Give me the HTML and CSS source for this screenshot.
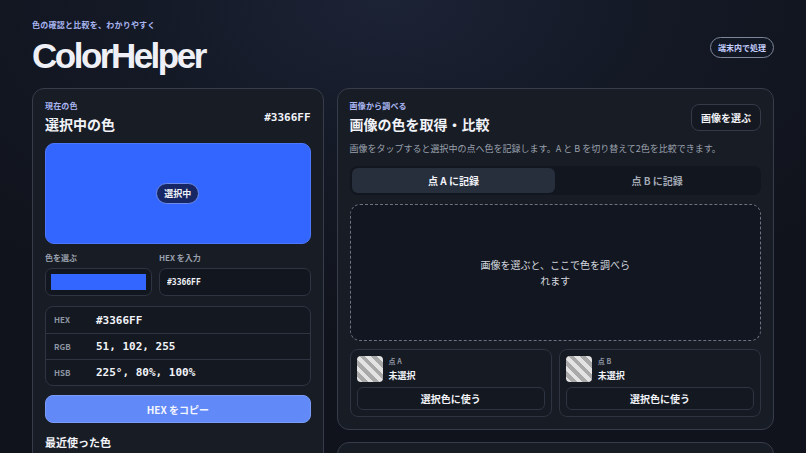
FILE: index.html
```html
<!DOCTYPE html>
<html lang="ja">
<head>
    <meta charset="UTF-8">
    <meta name="viewport" content="width=device-width, initial-scale=1.0">
    <title>ColorHelper</title>
    <link rel="stylesheet" href="styles.css">
</head>
<body>

<div class="page">
    <header class="header">
        <div>
            <p class="eyebrow">色の確認と比較を、わかりやすく</p>
            <h1 class="logo">ColorHelper</h1>
        </div>
        <span class="badge">端末内で処理</span>
    </header>

    <main class="layout">
        <section class="card">
            <div class="card-head">
                <div>
                    <p class="eyebrow small">現在の色</p>
                    <h2>選択中の色</h2>
                </div>
                <span class="mono current-hex">#3366FF</span>
            </div>

            <div class="swatch">
                <span class="swatch-pill">選択中</span>
            </div>

            <div class="pickers">
                <div class="field">
                    <label for="picker">色を選ぶ</label>
                    <div class="picker-box"><input type="color" id="picker" value="#3366ff"></div>
                </div>
                <div class="field">
                    <label for="hexInput">HEX を入力</label>
                    <input type="text" id="hexInput" class="hex-input" value="#3366FF">
                </div>
            </div>

            <table class="values">
                <tr><th>HEX</th><td>#3366FF</td></tr>
                <tr><th>RGB</th><td>51, 102, 255</td></tr>
                <tr><th>HSB</th><td>225°, 80%, 100%</td></tr>
            </table>

            <button class="copy-btn">HEX をコピー</button>

            <h3>最近使った色</h3>
            <div class="recent">
                <span class="recent-item" style="background: #3366ff"></span>
            </div>
        </section>

        <div class="column">
            <section class="card">
                <div class="card-head">
                    <div>
                        <p class="eyebrow small">画像から調べる</p>
                        <h2>画像の色を取得・比較</h2>
                    </div>
                    <button class="ghost-btn">画像を選ぶ</button>
                </div>

                <p class="desc">画像をタップすると選択中の点へ色を記録します。A と B を切り替えて2色を比較できます。</p>

                <div class="tabs">
                    <button class="tab active">点 A に記録</button>
                    <button class="tab">点 B に記録</button>
                </div>

                <div class="drop">
                    <p>画像を選ぶと、ここで色を調べられます</p>
                </div>

                <div class="points">
                    <div class="point">
                        <div class="point-info">
                            <span class="empty-swatch"></span>
                            <div>
                                <p class="point-label">点 A</p>
                                <p class="point-value">未選択</p>
                            </div>
                        </div>
                        <button class="use-btn">選択色に使う</button>
                    </div>
                    <div class="point">
                        <div class="point-info">
                            <span class="empty-swatch"></span>
                            <div>
                                <p class="point-label">点 B</p>
                                <p class="point-value">未選択</p>
                            </div>
                        </div>
                        <button class="use-btn">選択色に使う</button>
                    </div>
                </div>
            </section>

            <section class="card compare"></section>
        </div>
    </main>
</div>

</body>
</html>
```

FILE: styles.css
```css
* {
    box-sizing: border-box;
}
html, body {
    margin: 0;
    background: #10131b;
}
body {
    font-family: "Noto Sans CJK JP", "Noto Sans", sans-serif;
    color: #f1f3f8;
    background: radial-gradient(ellipse 70% 60% at 48% 0%, #1c2335 0%, #141926 45%, #10131b 100%);
    min-height: 100vh;
    overflow: hidden;
}
p, h1, h2, h3 {
    margin: 0;
}
button, input {
    font-family: inherit;
    color: inherit;
}

.page {
    padding: 19px 32px 0;
}
.header {
    display: flex;
    justify-content: space-between;
    align-items: center;
}
.eyebrow {
    font-size: 8px;
    line-height: 12px;
    font-weight: 700;
    letter-spacing: 0.03em;
    color: #a9b6f2;
}
.eyebrow.small {
    font-size: 8px;
    letter-spacing: 0.02em;
}
.logo {
    margin-top: 5px;
    font-family: "Liberation Sans", Arial, sans-serif;
    font-size: 35px;
    line-height: 40px;
    font-weight: 700;
    letter-spacing: -2.5px;
    color: #eef0f6;
}
.badge {
    padding: 4px 7px;
    font-size: 8px;
    line-height: 11px;
    font-weight: 700;
    color: #c3cdfa;
    border: 1px solid #7e869a;
    border-radius: 999px;
    background: #121724;
}

.layout {
    display: grid;
    grid-template-columns: 2fr 3fr;
    gap: 13px;
    margin-top: 12px;
    align-items: start;
}
.column {
    display: flex;
    flex-direction: column;
    gap: 12px;
}
.card {
    background: #181c25;
    border: 1px solid #363c4a;
    border-radius: 12px;
    padding: 11px 12px 12px;
}
.card.compare {
    min-height: 120px;
}
.card-head {
    display: flex;
    justify-content: space-between;
    align-items: center;
}
.card-head h2 {
    margin-top: 2px;
    font-size: 14px;
    line-height: 20px;
    font-weight: 700;
}
.mono {
    font-family: "DejaVu Sans Mono", "Liberation Mono", monospace;
    font-weight: 700;
}
.current-hex {
    font-size: 11px;
}

.swatch {
    margin-top: 9px;
    height: 101px;
    border-radius: 9px;
    background: #3366ff;
    border: 1px solid #4c78ff;
    display: flex;
    align-items: center;
    justify-content: center;
}
.swatch-pill {
    padding: 3px 7px;
    font-size: 9px;
    line-height: 13px;
    font-weight: 700;
    background: #172664;
    border: 1px solid #6d8be6;
    border-radius: 999px;
}

.pickers {
    margin-top: 8px;
    display: grid;
    grid-template-columns: 107px 1fr;
    gap: 7px;
}
.field label {
    display: block;
    font-size: 8px;
    line-height: 12px;
    font-weight: 700;
    color: #9aa1ae;
    margin-bottom: 4px;
}
.picker-box {
    height: 28px;
    padding: 5px;
    background: #12161e;
    border: 1px solid #2e3441;
    border-radius: 7px;
}
.picker-box input {
    display: block;
    width: 100%;
    height: 100%;
    padding: 0;
    border: none;
    background: #3366ff;
    appearance: none;
    -webkit-appearance: none;
}
.picker-box input::-webkit-color-swatch-wrapper {
    padding: 0;
}
.picker-box input::-webkit-color-swatch {
    border: none;
}
.hex-input {
    display: block;
    width: 100%;
    height: 28px;
    padding: 0 7px;
    font-family: "DejaVu Sans Mono", monospace;
    font-size: 8px;
    font-weight: 700;
    background: #12161e;
    border: 1px solid #2e3441;
    border-radius: 7px;
}

.values {
    margin-top: 10px;
    width: 100%;
    border-collapse: separate;
    border-spacing: 0;
    border: 1px solid #2e3441;
    border-radius: 8px;
    background: #141820;
}
.values th, .values td {
    height: 26px;
    text-align: left;
    border-top: 1px solid #2e3441;
}
.values tr:first-child th, .values tr:first-child td {
    border-top: none;
}
.values th {
    width: 49px;
    padding-left: 8px;
    font-size: 8px;
    font-weight: 700;
    color: #8f96a3;
    vertical-align: top;
    padding-top: 7px;
}
.values td {
    font-family: "DejaVu Sans Mono", monospace;
    font-size: 11px;
    font-weight: 700;
    color: #f1f3f8;
}

.copy-btn {
    margin-top: 9px;
    display: block;
    width: 100%;
    height: 28px;
    border: 1px solid #7b9bf9;
    border-radius: 8px;
    background: #6189f7;
    font-size: 10px;
    font-weight: 700;
    color: #f4f6ff;
}
.card h3 {
    margin-top: 11px;
    font-size: 11px;
    line-height: 16px;
    font-weight: 700;
}
.recent {
    margin-top: 8px;
    display: flex;
    gap: 6px;
}
.recent-item {
    width: 26px;
    height: 26px;
    border-radius: 6px;
}

.ghost-btn {
    height: 27px;
    padding: 0 9px;
    font-size: 10px;
    font-weight: 700;
    background: #141820;
    border: 1px solid #343a48;
    border-radius: 8px;
}
.desc {
    margin-top: 8px;
    font-size: 9px;
    line-height: 14px;
    color: #9aa1ae;
}
.tabs {
    margin-top: 10px;
    display: grid;
    grid-template-columns: 1fr 1fr;
    padding: 2px;
    background: #12161e;
    border-radius: 8px;
}
.tab {
    height: 25px;
    border: none;
    border-radius: 6px;
    background: transparent;
    font-size: 10px;
    font-weight: 700;
    color: #a3aab6;
}
.tab.active {
    background: #272e3c;
    color: #f1f3f8;
}
.drop {
    margin-top: 9px;
    height: 137px;
    border: 1px dashed #6c7381;
    border-radius: 10px;
    background: #121620;
    display: flex;
    align-items: center;
    justify-content: center;
}
.drop p {
    max-width: 152px;
    font-size: 10px;
    line-height: 16px;
    text-align: center;
    color: #d3d7df;
}

.points {
    margin-top: 8px;
    display: grid;
    grid-template-columns: 1fr 1fr;
    gap: 7px;
}
.point {
    padding: 6px;
    border: 1px solid #2e3441;
    border-radius: 8px;
    background: #161a22;
}
.point-info {
    display: flex;
    align-items: center;
    gap: 6px;
}
.empty-swatch {
    width: 26px;
    height: 26px;
    border-radius: 4px;
    background: repeating-linear-gradient(45deg, #e3e3e3 0 4px, #a9a9a9 4px 8px);
}
.point-label {
    font-size: 7px;
    line-height: 11px;
    font-weight: 700;
    color: #8f96a3;
}
.point-value {
    margin-top: 2px;
    font-size: 9px;
    line-height: 13px;
    font-weight: 700;
}
.use-btn {
    margin-top: 5px;
    display: block;
    width: 100%;
    height: 23px;
    font-size: 10px;
    font-weight: 700;
    background: #141820;
    border: 1px solid #2e3441;
    border-radius: 6px;
}
```
